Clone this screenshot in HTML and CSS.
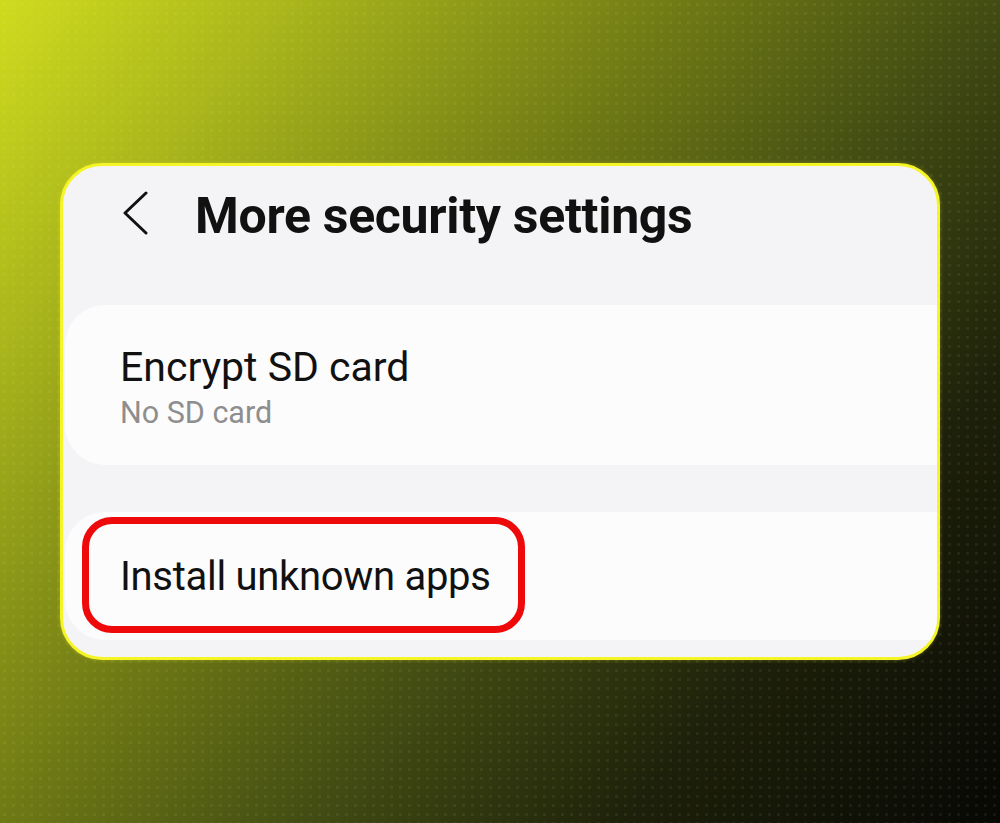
FILE: index.html
```html
<!DOCTYPE html>
<html lang="en">

<head>
	<meta charset="UTF-8">
	<meta name="viewport" content="width=device-width, initial-scale=1.0">
	<title>More security settings</title>
	<link rel="stylesheet" href="styles.css">
</head>

<body>
	<main class="stage">
		<section class="phone-card">
			<header class="top-bar">
				<svg class="back-icon" viewBox="0 0 28 44" xmlns="http://www.w3.org/2000/svg">
					<path d="M23 2 L2 22 L23 42" fill="none" stroke="currentColor" stroke-width="3" stroke-linecap="round" stroke-linejoin="round" />
				</svg>
				<h1 class="title">More security settings</h1>
			</header>

			<div class="setting-row">
				<div class="setting-name">Encrypt SD card</div>
				<div class="setting-sub">No SD card</div>
			</div>

			<div class="setting-row setting-row--last">
				<div class="setting-name setting-name--tight">Install unknown apps</div>
				<!-- highlight ring -->
				<div class="highlight"></div>
			</div>
		</section>
	</main>
</body>

</html>
```

FILE: styles.css
```css
* {
	margin: 0;
	padding: 0;
	box-sizing: border-box;
}

:root {
	--ring: #f4f427;
	--card-bg: #f4f4f6;
	--row-bg: #fcfcfd;
	--text: #111111;
	--text-secondary: #8e8e8e;
	--highlight: #ee0a0a;
}

body {
	width: 1000px;
	height: 823px;
	overflow: hidden;
	font-family: Roboto, "Liberation Sans", sans-serif;
	background:
		radial-gradient(circle, rgba(255, 255, 160, 0.06) 1.4px, transparent 2px) 0 0 / 9px 9px,
		linear-gradient(130deg, #cfdb1e 0%, #a8b41b 18%, #6e7915 41%, #424c13 59%, #1d200a 78%, #070704 100%);
}

.stage {
	padding: 163px 60px 0;
}

.phone-card {
	width: 880px;
	height: 497px;
	background: var(--card-bg);
	border: 3px solid var(--ring);
	border-radius: 42px;
	overflow: hidden;
	display: flex;
	flex-direction: column;
	box-shadow: 0 0 4px rgba(240, 240, 40, 0.3);
}

.top-bar {
	display: flex;
	align-items: center;
	height: 100px;
	padding-left: 60px;
	gap: 44px;
	color: var(--text);
}

.back-icon {
	width: 28px;
	height: 44px;
	margin-bottom: 7px;
	flex-shrink: 0;
}

.title {
	font-size: 50px;
	font-weight: 700;
	letter-spacing: -0.3px;
}

.setting-row {
	position: relative;
	margin: 39px -40px 0 2px;
	height: 160px;
	background: var(--row-bg);
	border-radius: 40px;
	padding: 38px 0 0 55px;
	color: var(--text);
}

.setting-row--last {
	margin-top: 47px;
	height: 128px;
	padding-top: 41px;
}

.setting-name {
	font-size: 41px;
	line-height: 48px;
}

.setting-name--tight {
	font-size: 40px;
	letter-spacing: -0.3px;
}

.setting-sub {
	margin-top: 4px;
	font-size: 30.5px;
	line-height: 36px;
	color: var(--text-secondary);
}

.highlight {
	position: absolute;
	left: 17px;
	top: 5px;
	width: 443px;
	height: 116px;
	border: 7px solid var(--highlight);
	border-radius: 30px;
}
```
